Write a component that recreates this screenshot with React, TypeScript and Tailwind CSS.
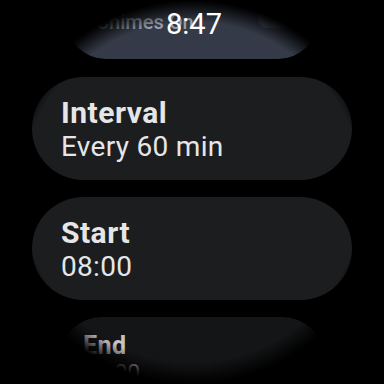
import React from "react";

function Card({ title, value }: { title: string; value: string }) {
  return (
    <div className="w-[320px] h-[103px] shrink-0 rounded-full bg-[#1c1d1f] pl-[29px] pt-[19px] flex flex-col">
      <div className="text-[30px] leading-[34px] font-bold tracking-[0.5px] text-[#e6e6e8] whitespace-nowrap">{title}</div>
      <div className="text-[28px] leading-[33px] tracking-[0.3px] text-[#e6e6e8] whitespace-nowrap">{value}</div>
    </div>
  );
}

export default function App() {
  return (
    <div className="w-[384px] h-[384px] bg-black relative overflow-hidden font-['Roboto',sans-serif]">
      <div className="w-[384px] h-[384px] rounded-full overflow-hidden flex flex-col items-center">
        <div className="w-[252px] h-[80px] shrink-0 mt-[-21px] rounded-full bg-[#343a47] flex items-center justify-between pl-[30px] pr-[26px]">
          <span className="text-[20px] leading-[20px] pt-[6px] font-medium text-[#9a9ea7] whitespace-nowrap">Chimes On</span>
          <div className="w-[34px] h-[18px] rounded-full bg-[#4b5160] flex items-center justify-end pr-[2px]">
            <div className="w-[14px] h-[14px] rounded-full bg-[#5d6372]" />
          </div>
        </div>
        <div className="mt-[18px]">
          <Card title="Interval" value="Every 60 min" />
        </div>
        <div className="mt-[17px]">
          <Card title="Start" value="08:00" />
        </div>
        <div className="mt-[17px] w-[266px] h-[86px] shrink-0 rounded-full bg-[#141517] pl-[24px] pt-[15px] flex flex-col">
          <div className="text-[25px] leading-[28px] font-bold tracking-[0.4px] text-[#c4c4c6]">End</div>
          <div className="text-[23px] leading-[27px] text-[#c4c4c6]">22:00</div>
        </div>
      </div>
      <div className="absolute inset-0 pointer-events-none bg-[radial-gradient(circle_at_center,transparent_170px,rgba(0,0,0,0.85)_188px,#000_192px)]" />
      <div className="absolute inset-x-0 top-[10px] pl-[4px] text-center text-[29px] leading-[29px] font-normal text-white">8:47</div>
    </div>
  );
}
